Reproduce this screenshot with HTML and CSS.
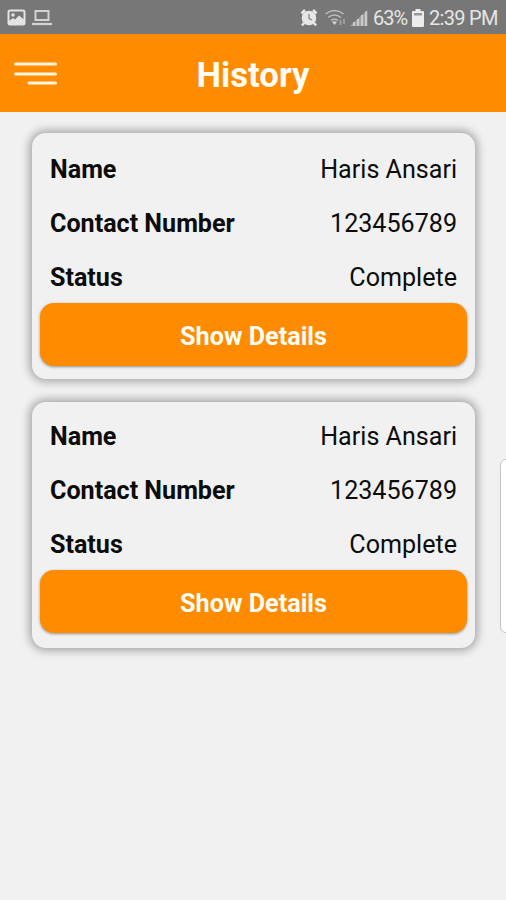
FILE: index.html
```html
<!DOCTYPE html>
<html lang="en">
<head>
<meta charset="utf-8">
<title>History</title>
<link rel="stylesheet" href="styles.css">
</head>
<body>
<div class="status">
  <svg class="status-left" width="46" height="18" viewBox="0 0 46 18">
    <rect x="1.500" y="1.500" width="16" height="14" rx="1.500" fill="none" stroke="#e4e4e4" stroke-width="2"/>
    <circle cx="6" cy="6" r="1.800" fill="#e4e4e4"/>
    <path d="M2 12l4-3 2 1.500 4-4 5 4v5H2z" fill="#e4e4e4"/>
    <path d="M28.500 2h13v9h-13z" fill="none" stroke="#d4d4d4" stroke-width="2"/>
    <path d="M25 15h20" stroke="#d4d4d4" stroke-width="2.200"/>
  </svg>
  <div class="status-right">
    <svg class="signals" width="70" height="20" viewBox="0 0 70 20">
      <circle cx="9" cy="10" r="7.300" fill="#e6e6e6"/>
      <path d="M1.500 5.500L5 2M16.500 5.500L13 2M4 15l-2 2.500M14 15l2 2.500" stroke="#e6e6e6" stroke-width="2.600"/>
      <path d="M9 6v4.500l3 1.500" fill="none" stroke="#888" stroke-width="1.300"/>
      <g fill="none" stroke="#bdbdbd" stroke-width="1.500">
        <path d="M25.500 6q9-7 18 0M28 9.500q6.500-5 13 0M31 12.500q3.500-2.500 7 0"/>
      </g>
      <path d="M32 14q2.500-1.500 5 0l-2.500 3z" fill="#d0d0d0"/>
      <path d="M40.500 12v5M44 11v5" stroke="#a0a0a0" stroke-width="1.800"/>
      <path d="M50 18L67.500 2v16z" fill="#a2a2a2"/>
      <path d="M54 14v4M58 11v7M62 7v11M66 3.500v14.500" stroke="#c9c9c9" stroke-width="2"/>
    </svg>
    <span class="battery-label">63%</span>
    <svg class="battery" width="12" height="18" viewBox="0 0 12 18">
      <path d="M3.500 0h5v2H11q1 0 1 1v14q0 1-1 1H1q-1 0-1-1V3q0-1 1-1h2.500z" fill="#ececec"/>
      <path d="M2 4h8v2.500H2z" fill="#999"/>
    </svg>
    <span class="clock">2:39 PM</span>
  </div>
</div>
<header class="header">
  <svg class="menu" width="44" height="26" viewBox="0 0 44 26">
    <path d="M1.500 3h40M1.500 13h40M15 22h26.500" stroke="#fff6df" stroke-width="3" stroke-linecap="round"/>
  </svg>
  <h1 class="title">History</h1>
</header>
<main class="list">
  <section class="card">
    <div class="row"><span class="label">Name</span><span class="value">Haris Ansari</span></div>
    <div class="row"><span class="label">Contact Number</span><span class="value">123456789</span></div>
    <div class="row"><span class="label">Status</span><span class="value">Complete</span></div>
    <button class="details">Show Details</button>
  </section>
  <section class="card">
    <div class="row"><span class="label">Name</span><span class="value">Haris Ansari</span></div>
    <div class="row"><span class="label">Contact Number</span><span class="value">123456789</span></div>
    <div class="row"><span class="label">Status</span><span class="value">Complete</span></div>
    <button class="details">Show Details</button>
  </section>
</main>
<div class="edge-handle"></div>
</body>
</html>
```
FILE: styles.css
```css
* { box-sizing: border-box; }
body {
  margin: 0;
  position: relative;
  height: 900px;
  overflow: hidden;
  background: #f1f1f1;
  font-family: Roboto, sans-serif;
  color: #0c0c0c;
}
svg { display: block; flex: none; }
.status {
  height: 34px;
  background: #777;
  color: #e6e6e6;
  display: flex;
  justify-content: space-between;
  padding: 0 9px 0 7px;
}
.status-left { margin-top: 9px; }
.status-right { display: flex; align-items: center; font-size: 20px; white-space: nowrap; padding-top: 2px; }
.battery-label { width: 34px; margin-left: 3px; letter-spacing: -1px; }
.battery { margin-left: 5px; }
.clock { margin-left: 5px; width: 68px; letter-spacing: -0.7px; }
.header {
  height: 78px;
  background: #ff8c00;
  display: grid;
  grid-template-columns: 1fr auto 1fr;
  align-items: center;
  padding: 0 14px;
}
.menu { margin-top: 1px; }
.title { margin: 3px 0 0; color: #fffdf5; font-size: 34.700px; line-height: 40px; font-weight: 700; }
.list { display: flex; flex-direction: column; gap: 23px; padding: 21px 31px 0 32px; }
.card {
  height: 246px;
  border-radius: 14px;
  background: #f1f1f1;
  padding: 9px 8px 0;
  box-shadow: 0 0 8px 3px rgba(0, 0, 0, 0.3);
}
.card + .card { padding-top: 7px; }
.row {
  height: 54px;
  display: flex;
  justify-content: space-between;
  align-items: center;
  padding: 2px 10px 0;
  font-size: 25.100px;
  line-height: 30px;
}
.label { font-weight: 700; }
.details {
  display: block;
  width: 100%;
  height: 63px;
  margin-top: -1px;
  padding: 4px 0 0;
  border: 0;
  border-radius: 14px;
  background: #ff8c00;
  color: #fffdf5;
  font: 700 25.200px/30px Roboto, sans-serif;
  box-shadow: 0 1px 3px rgba(0, 0, 0, 0.4);
}
.edge-handle {
  position: absolute;
  left: 500px;
  top: 459px;
  width: 12px;
  height: 174px;
  border: 1px solid #c4c4c4;
  border-radius: 6px;
  background: #fff;
}
```
